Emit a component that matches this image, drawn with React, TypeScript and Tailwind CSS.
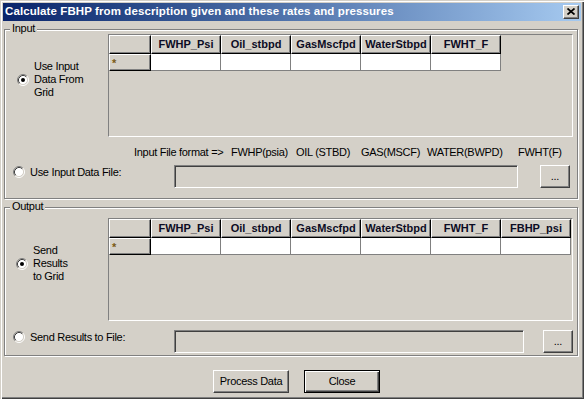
import type { ReactNode } from "react";

const INPUT_COLS = ["FWHP_Psi", "Oil_stbpd", "GasMscfpd", "WaterStbpd", "FWHT_F"];
const OUTPUT_COLS = [...INPUT_COLS, "FBHP_psi"];

// raised 3D look used by grid headers
const HEAD =
  "flex items-center justify-center border border-t-white border-l-white border-r-black border-b-black shadow-[inset_-1px_-1px_0_#808080] bg-[#d4d0c8]";

function Radio({ checked }: { checked?: boolean }) {
  return (
    <svg width="12" height="12" viewBox="0 0 12 12" className="shrink-0">
      <circle cx="6" cy="6" r="4.5" fill="#fff" />
      <path d="M2.11 9.89A5.5 5.5 0 0 1 9.89 2.11" fill="none" stroke="#808080" />
      <path d="M9.89 2.11A5.5 5.5 0 0 1 2.11 9.89" fill="none" stroke="#fff" />
      <path d="M2.82 9.18A4.5 4.5 0 0 1 9.18 2.82" fill="none" stroke="#404040" />
      <path d="M9.18 2.82A4.5 4.5 0 0 1 2.82 9.18" fill="none" stroke="#d4d0c8" />
      {checked ? <circle cx="6" cy="6" r="2" fill="#000" /> : null}
    </svg>
  );
}

function Group({ label, className, children }: { label: string; className: string; children: ReactNode }) {
  return (
    <div
      className={`relative ml-px mr-[3px] border border-[#808080] shadow-[inset_1px_1px_0_#fff,1px_1px_0_#fff] ${className}`}
    >
      <span className="absolute left-[5px] top-[-8px] bg-[#d4d0c8] px-[2px] leading-[13px]">{label}</span>
      {children}
    </div>
  );
}

function Grid({ cols }: { cols: string[] }) {
  return (
    <div className="h-[103px] w-[465px] shrink-0 border border-t-[#808080] border-l-[#808080] border-r-white border-b-white">
      <div className="flex h-[19px]">
        <div className={`${HEAD} w-[42px]`} />
        {cols.map((c) => (
          <div key={c} className={`${HEAD} w-[70px] text-[11px] font-bold tracking-normal text-[#0c0c24]`}>
            {c}
          </div>
        ))}
      </div>
      <div className="flex h-[17px]">
        <div className={`${HEAD} w-[42px] !justify-start !items-start pl-[2px] text-[11px] font-bold leading-[17px] text-[#7a5a14]`}>
          *
        </div>
        {cols.map((c) => (
          <div key={c} className="w-[70px] border-r border-b border-[#808080] bg-white" />
        ))}
      </div>
    </div>
  );
}

function GridRow({ cols, lines, indent }: { cols: string[]; lines: string[]; indent: string }) {
  return (
    <div className="flex">
      <div className={`w-[103px] shrink-0 pt-[26px] ${indent}`}>
        <div className="flex items-center">
          <Radio checked />
          <div className="ml-[5px] leading-[13px]">
            {lines.map((l) => (
              <div key={l}>{l}</div>
            ))}
          </div>
        </div>
      </div>
      <Grid cols={cols} />
    </div>
  );
}

function FileRow({ label, boxW, gap }: { label: string; boxW: string; gap: string }) {
  return (
    <div className="flex h-[23px]">
      <div className="flex h-[14px] w-[169px] shrink-0 items-center pl-[8px]">
        <Radio />
        <span className="ml-[5px] leading-[14px]">{label}</span>
      </div>
      <div
        className={`h-[23px] ${boxW} border border-t-[#808080] border-l-[#808080] border-r-white border-b-white shadow-[inset_1px_1px_0_#404040]`}
      />
      <button
        className={`${gap} flex h-[23px] w-[30px] items-center justify-center border border-t-white border-l-white border-r-[#404040] border-b-[#404040] shadow-[inset_-1px_-1px_0_#808080] text-[11px]`}
      >
        ...
      </button>
    </div>
  );
}

export default function App() {
  return (
    <div className="h-[399px] w-[584px] bg-[#d4d0c8] p-[3px] font-['Liberation_Sans',Arial,sans-serif] text-[11px] tracking-[-0.3px] text-black shadow-[inset_1px_1px_0_#d4d0c8,inset_2px_2px_0_#fff,inset_-1px_-1px_0_#404040,inset_-2px_-2px_0_#808080]">
      {/* title bar */}
      <div className="flex h-[18px] items-center justify-between bg-linear-to-r from-[#0a246a] to-[#a6caf0] pl-[2px] pr-[2px]">
        <span className="text-[11.5px] font-bold tracking-[0.1px] text-white">
          Calculate FBHP from description given and these rates and pressures
        </span>
        <div className="flex h-[14px] w-[16px] items-center justify-center border border-t-white border-l-white border-r-[#404040] border-b-[#404040] bg-[#d4d0c8] shadow-[inset_-1px_-1px_0_#808080]">
          <svg width="8" height="7" viewBox="0 0 8 7" className="mb-px mr-px">
            <path d="M0.5 0.5L7.5 6.5M7.5 0.5L0.5 6.5" stroke="#000" strokeWidth="1.7" />
          </svg>
        </div>
      </div>

      <Group label="Input" className="mt-[8px] h-[170px]">
        <div className="pt-[4px]">
          <GridRow cols={INPUT_COLS} lines={["Use Input", "Data From", "Grid"]} indent="pl-[12px]" />
        </div>
        <div className="mt-[9px] flex h-[13px] items-center pl-[129px] leading-[13px]">
          <span className="w-[97px]">Input File format =&gt;</span>
          <span className="w-[65px]">FWHP(psia)</span>
          <span className="w-[65px]">OIL (STBD)</span>
          <span className="w-[66px]">GAS(MSCF)</span>
          <span className="w-[91px]">WATER(BWPD)</span>
          <span>FWHT(F)</span>
        </div>
        <div className="mt-[6px]">
          <FileRow label="Use Input Data File:" boxW="w-[344px]" gap="ml-[22px]" />
        </div>
      </Group>

      <Group label="Output" className="mt-[8px] h-[149px]">
        <div className="pt-[10px]">
          <GridRow cols={OUTPUT_COLS} lines={["Send", "Results", "to Grid"]} indent="pl-[11px]" />
        </div>
        <div className="mt-[9px]">
          <FileRow label="Send Results to File:" boxW="w-[350px]" gap="ml-[19px]" />
        </div>
      </Group>

      <div className="mt-[14px] flex gap-[15px] pl-[210px]">
        <button className="h-[23px] w-[76px] border border-t-white border-l-white border-r-[#404040] border-b-[#404040] shadow-[inset_-1px_-1px_0_#808080]">
          Process Data
        </button>
        <button className="h-[23px] w-[76px] border border-black shadow-[inset_1px_1px_0_#fff,inset_-1px_-1px_0_#404040,inset_-2px_-2px_0_#808080]">
          Close
        </button>
      </div>
    </div>
  );
}
